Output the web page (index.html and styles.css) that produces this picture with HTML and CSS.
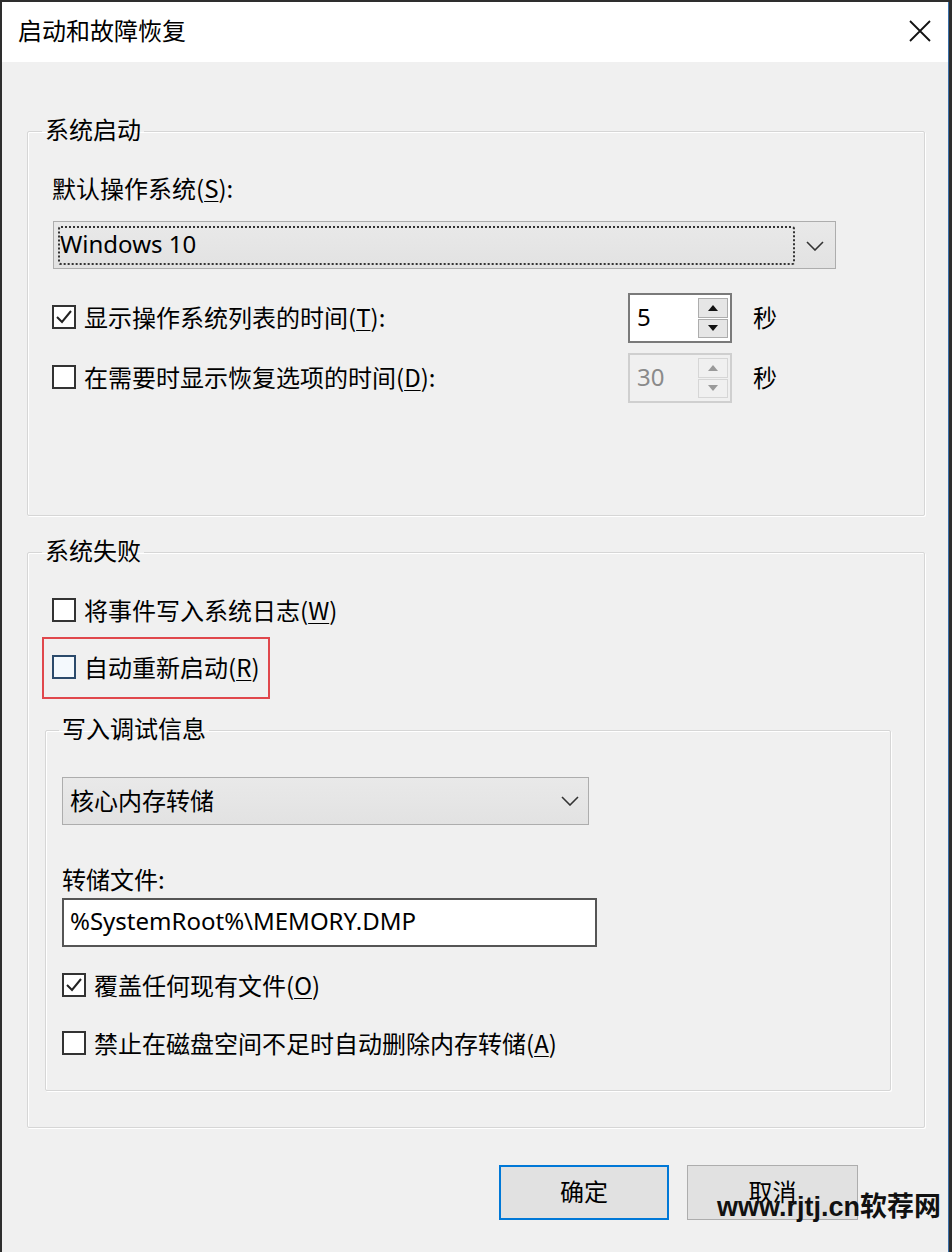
FILE: index.html
```html
<!DOCTYPE html>
<html lang="zh-CN">
<head>
<meta charset="utf-8">
<title>启动和故障恢复</title>
<link rel="stylesheet" href="styles.css">
</head>
<body>
<div class="window">
  <div class="titlebar">
    <span class="title">启动和故障恢复</span>
    <svg class="close" width="24" height="24" viewBox="0 0 24 24"><path d="M2 2 L22 22 M22 2 L2 22" stroke="#111" stroke-width="1.8" fill="none"/></svg>
  </div>
  <div class="content">
    <fieldset class="group group-startup">
      <legend class="legend legend-outer">系统启动</legend>
      <div class="label label-os">默认操作系统(<u>S</u>):</div>
      <div class="combo combo-os">
        <div class="focus-rect"><span class="txt">Windows 10</span></div>
        <div class="chev-zone"><svg width="18" height="10" viewBox="0 0 18 10"><path d="M1 1 L9 9 L17 1" stroke="#333" stroke-width="1.6" fill="none"/></svg></div>
      </div>
      <div class="timer-row timer-first">
        <div class="check-row timer-label">
          <span class="box checked"><svg width="20" height="20" viewBox="0 0 20 20"><path d="M3 10 L8 15 L17 4" stroke="#222" stroke-width="2" fill="none"/></svg></span>
          <span class="txt">显示操作系统列表的时间(<u>T</u>):</span>
        </div>
        <div class="spin">
          <div class="spin-input"><span class="txt">5</span></div>
          <div class="spin-btns">
            <div class="spin-btn"><span class="tri up"></span></div>
            <div class="spin-btn"><span class="tri down"></span></div>
          </div>
        </div>
        <span class="unit txt">秒</span>
      </div>
      <div class="timer-row timer-second">
        <div class="check-row timer-label">
          <span class="box"></span>
          <span class="txt">在需要时显示恢复选项的时间(<u>D</u>):</span>
        </div>
        <div class="spin disabled">
          <div class="spin-input"><span class="txt">30</span></div>
          <div class="spin-btns">
            <div class="spin-btn"><span class="tri up"></span></div>
            <div class="spin-btn"><span class="tri down"></span></div>
          </div>
        </div>
        <span class="unit txt">秒</span>
      </div>
    </fieldset>

    <fieldset class="group group-failure">
      <legend class="legend legend-outer">系统失败</legend>
      <div class="check-row row-log">
        <span class="box"></span>
        <span class="txt">将事件写入系统日志(<u>W</u>)</span>
      </div>
      <div class="highlight">
        <div class="check-row">
          <span class="box hover"></span>
          <span class="txt">自动重新启动(<u>R</u>)</span>
        </div>
      </div>
      <fieldset class="group group-debug">
        <legend class="legend legend-inner">写入调试信息</legend>
        <div class="combo combo-dump">
          <div class="combo-text"><span class="txt">核心内存转储</span></div>
          <div class="chev-zone"><svg width="18" height="10" viewBox="0 0 18 10"><path d="M1 1 L9 9 L17 1" stroke="#333" stroke-width="1.6" fill="none"/></svg></div>
        </div>
        <div class="label label-file">转储文件:</div>
        <div class="textbox"><span class="txt">%SystemRoot%\MEMORY.DMP</span></div>
        <div class="check-row row-overwrite">
          <span class="box checked"><svg width="20" height="20" viewBox="0 0 20 20"><path d="M3 10 L8 15 L17 4" stroke="#222" stroke-width="2" fill="none"/></svg></span>
          <span class="txt">覆盖任何现有文件(<u>O</u>)</span>
        </div>
        <div class="check-row row-disable">
          <span class="box"></span>
          <span class="txt">禁止在磁盘空间不足时自动删除内存转储(<u>A</u>)</span>
        </div>
      </fieldset>
    </fieldset>

    <div class="buttons">
      <div class="btn btn-default"><span class="txt">确定</span></div>
      <div class="btn"><span class="txt">取消</span></div>
    </div>
  </div>
  <div class="watermark">www.rjtj.cn软荐网</div>
</div>
</body>
</html>
```
FILE: styles.css
```css
* { box-sizing: border-box; }
html, body { margin: 0; padding: 0; }
body {
  background: #2e2e2e;
  width: 952px;
  height: 1252px;
  overflow: hidden;
  font-family: "Noto Sans", "Noto Sans CJK SC", sans-serif;
  font-size: 24px;
  color: #000;
}
.window {
  position: relative;
  margin: 2px 0 0 2px;
  width: 947px;
  height: 1250px;
  background: #f0f0f0;
  border-right: 1px solid #3b6fa8;
}
.titlebar {
  height: 60px;
  background: #fff;
  display: flex;
  align-items: center;
  justify-content: space-between;
  padding: 0 16px 0 16px;
}
.title {
  font-family: "Noto Sans CJK SC", sans-serif;
  line-height: 32px;
  margin-top: -4px;
}
.close { margin-top: -3px; margin-right: 0; }
.content {
  display: flex;
  flex-direction: column;
}
.txt { padding-bottom: 4px; }
.group {
  margin: 0;
  padding: 0;
  min-width: 0;
  border: 1px solid #d6d6d6;
  border-radius: 2px;
  box-shadow: inset 1px 1px 0 #fff, 1px 1px 0 #fff;
}
.group-startup {
  margin: 53px 23px 0 25px;
  padding: 0 0 112px 24px;
}
.group-failure {
  margin: 20px 23px 0 25px;
  padding: 0 0 36px 24px;
}
.group-debug {
  margin: 15px 33px 0 -7px;
  padding: 0 0 30px 16px;
}
.legend {
  font-family: "Noto Sans CJK SC", sans-serif;
  line-height: 28px;
  padding: 0 3px 4px;
}
.legend-outer { margin-left: -10px; }
.legend-inner { margin-left: -3px; }
.label {
  font-family: "Noto Sans CJK SC", sans-serif;
  line-height: 28px;
  height: 32px;
}
.label-os { margin-top: 27px; }
u { text-underline-offset: 3px; text-decoration-thickness: 1px; }

.combo {
  display: flex;
  align-items: stretch;
  background: linear-gradient(#e9e9e9, #e2e2e2);
  border: 1px solid #adadad;
  height: 48px;
}
.combo-os {
  margin-top: 15px;
  width: 783px;
  margin-left: 1px;
  padding: 4px 0 3px 4px;
}
.focus-rect {
  flex: 1;
  border: 2px dotted #333;
  border-radius: 3px;
  display: flex;
  align-items: center;
  padding-left: 0;
  line-height: 32px;
}
.chev-zone {
  width: 40px;
  display: flex;
  align-items: center;
  justify-content: center;
}
.combo-dump {
  margin-top: 31px;
  width: 527px;
  padding-left: 7px;
}
.combo-text {
  flex: 1;
  display: flex;
  align-items: center;
  font-family: "Noto Sans CJK SC", sans-serif;
}
.combo-dump .chev-zone { width: 36px; }

.check-row {
  display: flex;
  align-items: center;
  gap: 8px;
  height: 32px;
  font-family: "Noto Sans CJK SC", sans-serif;
  white-space: nowrap;
}
.box {
  width: 24px;
  height: 24px;
  border: 2px solid #333;
  background: #fff;
  display: flex;
  align-items: center;
  justify-content: center;
  flex: none;
  margin-top: -2px;
}
.box.hover { border-color: #2b4a6b; background: #f4f9fd; }

.timer-row {
  display: flex;
  align-items: center;
}
.timer-first { margin-top: 24px; }
.timer-second { margin-top: 10px; }
.timer-label { width: 576px; }
.spin {
  width: 104px;
  height: 50px;
  display: flex;
  border: 2px solid #7a7a7a;
  background: #fff;
}
.spin-input {
  flex: 1;
  display: flex;
  align-items: center;
  padding-left: 7px;
  font-size: 24px;
}
.spin-btns {
  width: 32px;
  display: flex;
  flex-direction: column;
  padding: 3px 2px 3px 0;
  gap: 1px;
}
.spin-btn {
  flex: 1;
  background: #e6e6e6;
  border: 1px solid #adadad;
  display: flex;
  align-items: center;
  justify-content: center;
}
.tri {
  width: 0; height: 0;
  border-left: 5px solid transparent;
  border-right: 5px solid transparent;
}
.tri.up { border-bottom: 6px solid #111; }
.tri.down { border-top: 6px solid #111; }
.spin.disabled { border-color: #cfcfcf; background: #f0f0f0; }
.spin.disabled .spin-input { color: #8a8a8a; }
.spin.disabled .spin-btn { background: #f0f0f0; border-color: #d6d6d6; }
.spin.disabled .tri.up { border-bottom-color: #9a9a9a; }
.spin.disabled .tri.down { border-top-color: #9a9a9a; }
.unit {
  margin-left: 21px;
  font-family: "Noto Sans CJK SC", sans-serif;
}

.row-log { margin-top: 27px; }
.highlight {
  margin-top: 10px;
  margin-left: -10px;
  width: 228px;
  border: 2px solid #e0474c;
  padding: 13px 0 13px 8px;
}

.label-file { margin-top: 40px; }
.textbox {
  margin-top: 1px;
  width: 535px;
  height: 49px;
  background: #fff;
  border: 2px solid #555;
  display: flex;
  align-items: center;
  padding-left: 6px;
}
.row-overwrite { margin-top: 23px; }
.row-disable { margin-top: 26px; }

.buttons {
  display: flex;
  justify-content: flex-end;
  gap: 18px;
  margin: 37px 90px 0 0;
}
.btn {
  width: 171px;
  height: 55px;
  background: #e1e1e1;
  border: 1px solid #adadad;
  display: flex;
  align-items: center;
  justify-content: center;
  font-family: "Noto Sans CJK SC", sans-serif;
}
.btn-default {
  width: 170px;
  border: 2px solid #0078d7;
}
.watermark {
  position: absolute;
  left: 715px;
  top: 1187px;
  font-family: "Liberation Sans", "Noto Sans CJK SC", sans-serif;
  font-weight: bold;
  font-size: 27px;
  line-height: 36px;
  color: #111;
  white-space: nowrap;
}
```
